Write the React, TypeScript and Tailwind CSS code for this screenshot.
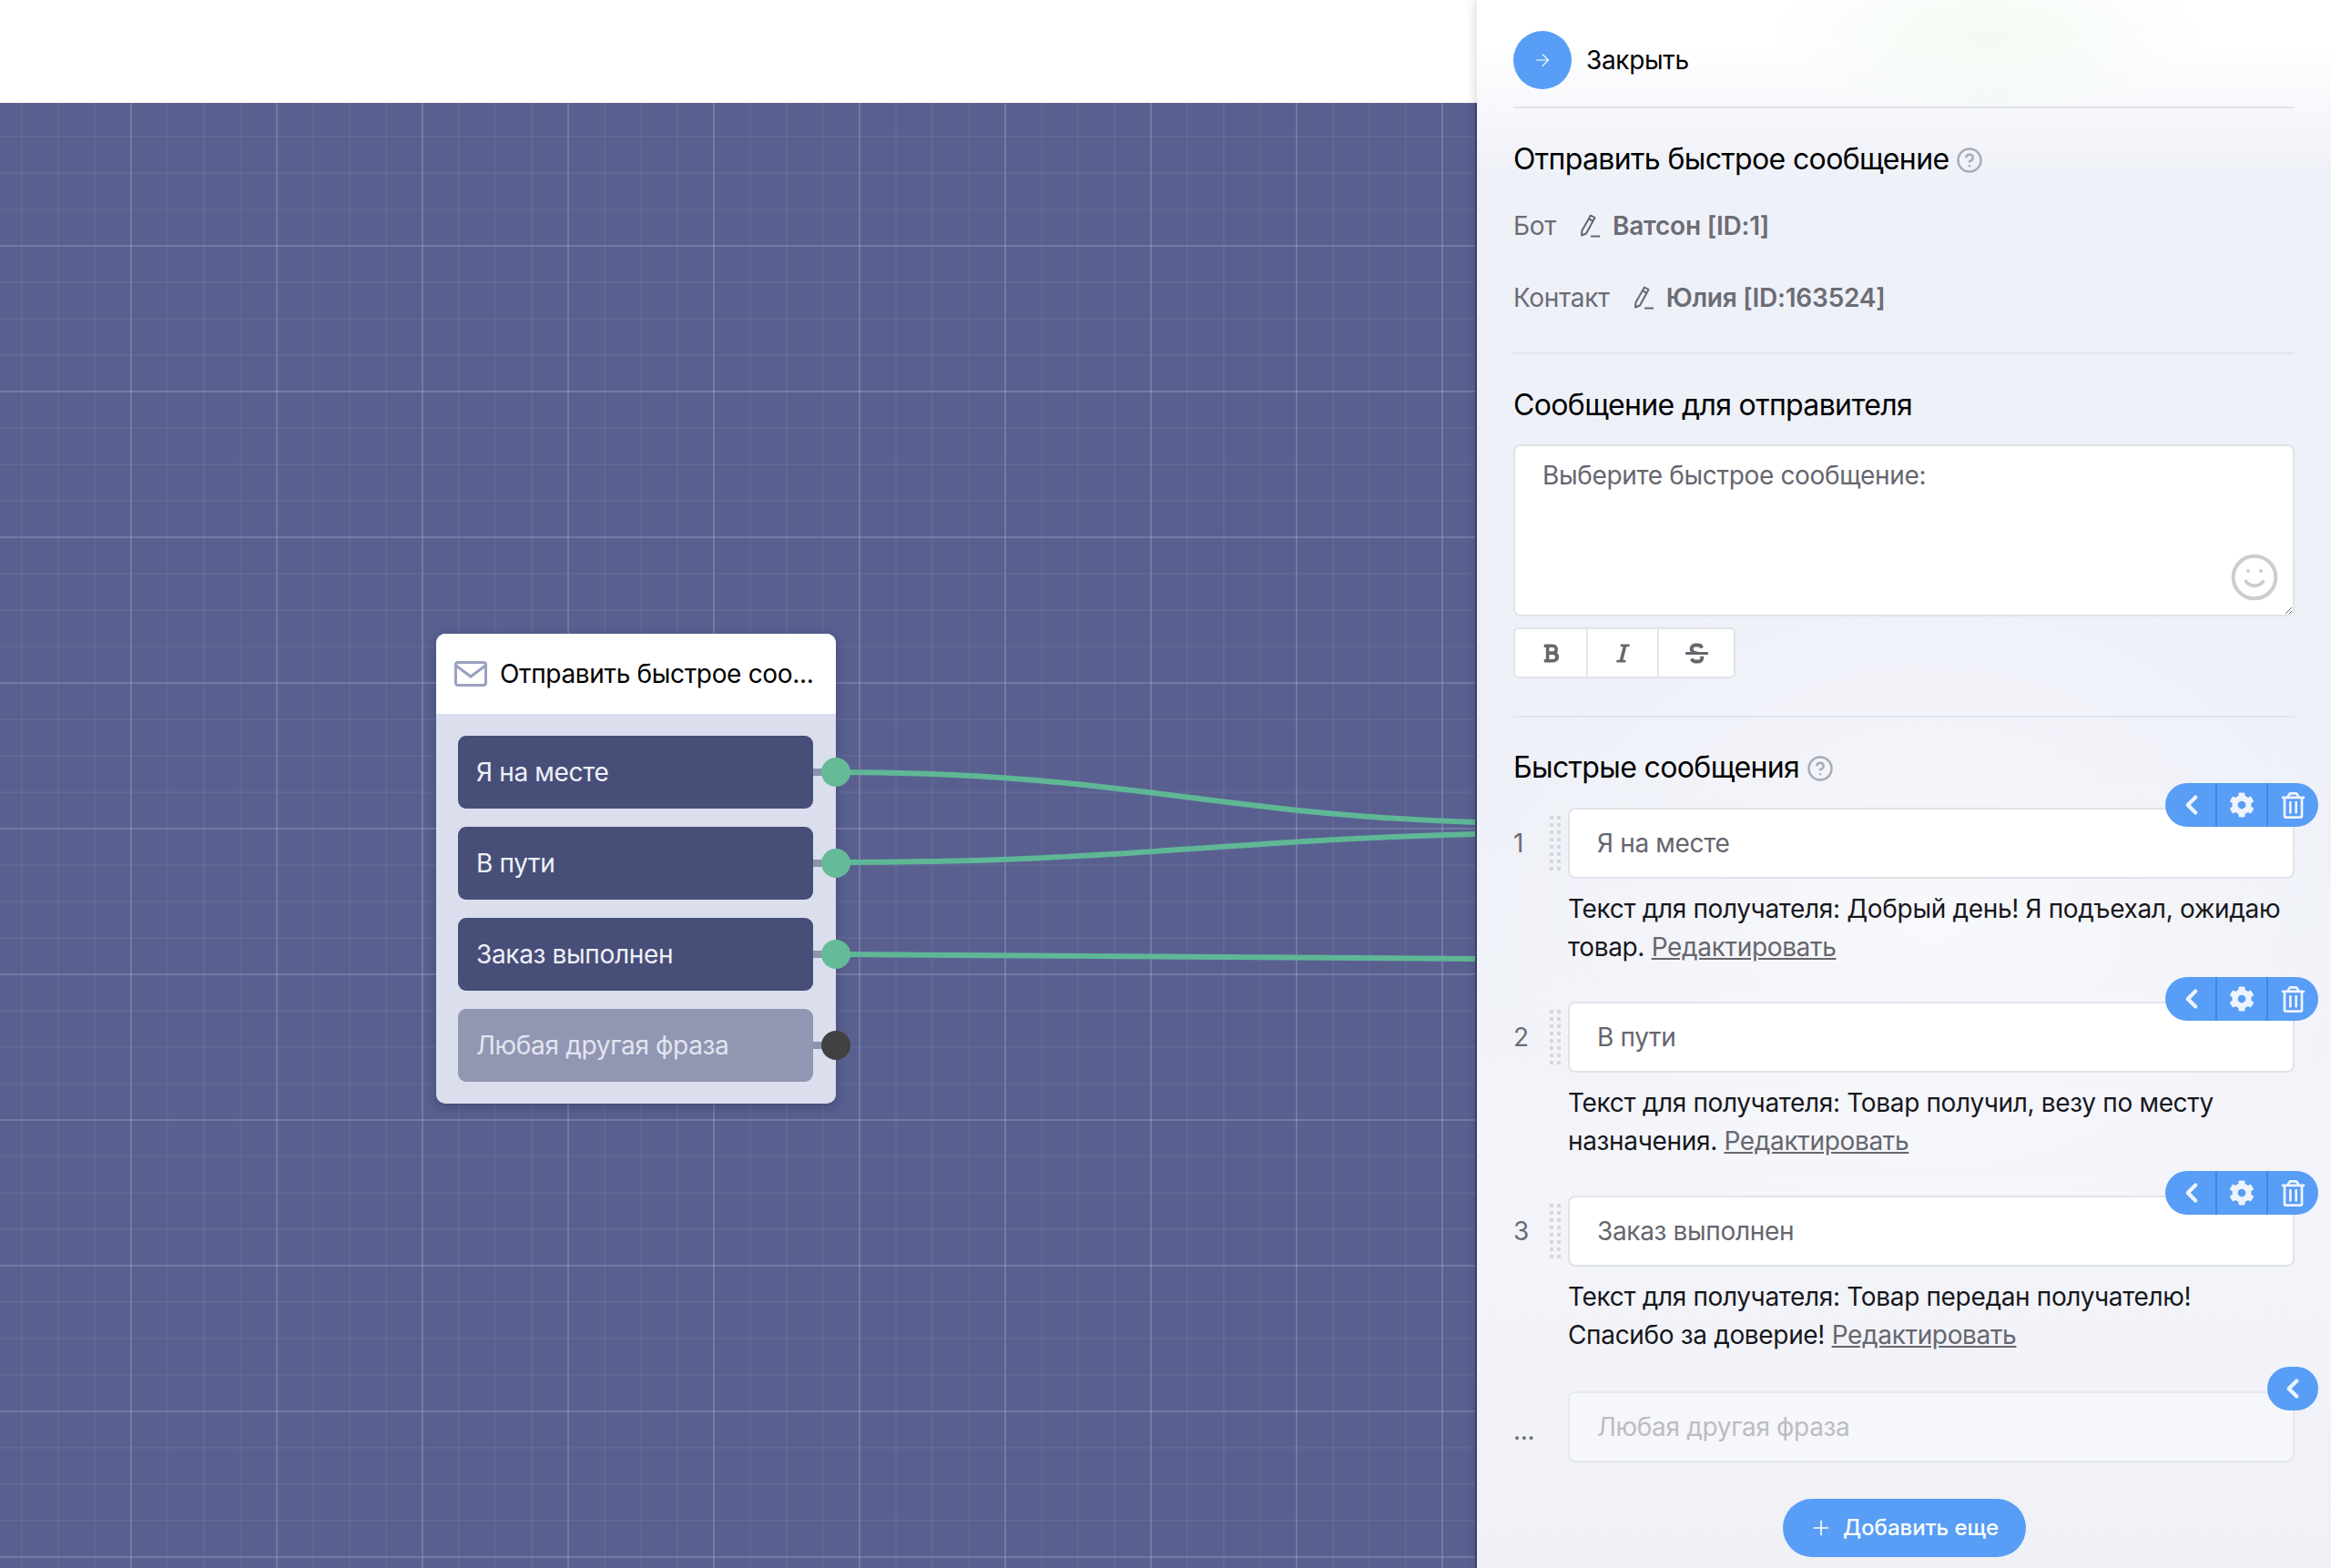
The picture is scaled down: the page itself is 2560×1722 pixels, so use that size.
import React from 'react';
import { ArrowRight, ChevronLeft, CircleHelp, Plus, Smile } from 'lucide-react';
import { FaBold, FaCog, FaItalic, FaRegTrashAlt, FaStrikethrough } from 'react-icons/fa';

const FONT = "font-['Inter','Noto_Sans',sans-serif]";

const nodeRows = [
  { label: 'Я на месте', muted: false },
  { label: 'В пути', muted: false },
  { label: 'Заказ выполнен', muted: false },
  { label: 'Любая другая фраза', muted: true },
];

const messages = [
  { n: '1', label: 'Я на месте', lines: ['Текст для получателя: Добрый день! Я подъехал, ожидаю', 'товар. '] },
  { n: '2', label: 'В пути', lines: ['Текст для получателя: Товар получил, везу по месту', 'назначения. '] },
  { n: '3', label: 'Заказ выполнен', lines: ['Текст для получателя: Товар передан получателю!', 'Спасибо за доверие! '] },
];

const PencilIcon = () => (
  <svg width="24" height="28" viewBox="0 0 24 28" fill="none" stroke="#66666e" strokeWidth="2" className="shrink-0">
    <path d="M13 2.5l4.5 2.5L8 22.5l-5 2 .4-5.2z" strokeLinejoin="round" />
    <path d="M11 6.2l4.5 2.6M13 25.5h10" />
  </svg>
);

const DragHandle = () => (
  <div className="grid grid-cols-2 gap-x-[4px] gap-y-[4px] w-[12px]">
    {Array.from({ length: 16 }).map((_, i) => (
      <span key={i} className="w-[4px] h-[4px] bg-[#d6d7de]" />
    ))}
  </div>
);

const ActionPill = () => (
  <div className="absolute -top-[29px] -right-[28px] flex h-[48px] w-[168px] rounded-full bg-[#589df6] text-[#eef4fe] overflow-hidden">
    <div className="w-[57px] flex items-center justify-center border-r-2 border-[#3f87ec] pl-[3px]">
      <ChevronLeft size={34} strokeWidth={3} />
    </div>
    <div className="w-[56px] flex items-center justify-center border-r-2 border-[#3f87ec]">
      <FaCog size={28} />
    </div>
    <div className="flex-1 flex items-center justify-center">
      <FaRegTrashAlt size={29} />
    </div>
  </div>
);

const Divider = ({ className }: { className: string }) => <div className={`h-[2px] bg-[#e1e4ee] ${className}`} />;

const Canvas = () => (
  <div className="relative flex-1 overflow-hidden border-r-2 border-[#3f4670] bg-[#596090] bg-[linear-gradient(to_right,rgba(255,255,255,0.12)_2px,transparent_2px),linear-gradient(to_bottom,rgba(255,255,255,0.12)_2px,transparent_2px),linear-gradient(to_right,rgba(255,255,255,0.045)_2px,transparent_2px),linear-gradient(to_bottom,rgba(255,255,255,0.045)_2px,transparent_2px)] bg-[size:160px_160px,160px_160px,40px_40px,40px_40px] bg-[position:143px_156px,143px_156px,23px_36px,23px_36px]">
    <svg className="absolute inset-0" width="1622" height="1609" fill="none" stroke="#5fb795" strokeWidth="6">
      <path d="M918 735 C1230 735 1340 782 1622 790" />
      <path d="M918 834 C1230 834 1340 810 1622 803" />
      <path d="M918 935 C1230 935 1340 940 1622 940" />
    </svg>

    <div className={`absolute left-[479px] top-[583px] w-[439px] rounded-[10px] bg-[#dbdeed] shadow-[0_4px_12px_rgba(30,35,70,0.35)] text-[28px] tracking-[-0.012em] ${FONT}`}>
      <div className="h-[88px] rounded-t-[10px] bg-white flex items-center pl-[20px] pr-[24px] gap-[14px]">
        <svg width="36" height="28" viewBox="0 0 36 28" fill="none" stroke="#9aa1c0" strokeWidth="3" className="shrink-0">
          <rect x="1.5" y="1.5" width="33" height="25" rx="2.5" />
          <path d="M2 5l16 12L34 5" />
        </svg>
        <span className="whitespace-nowrap leading-[40px] text-black">Отправить быстрое соо...</span>
      </div>
      <div className="flex flex-col gap-[20px] pt-[24px] pb-[24px] pl-[24px] pr-[25px]">
        {nodeRows.map(row => (
          <div key={row.label} className="relative">
            <div
              className={`h-[80px] rounded-[9px] flex items-center px-[20px] ${
                row.muted ? 'bg-[#9196b3] text-[#e3e5f0]' : 'bg-[#474e78] text-[#eef0f8]'
              }`}
            >
              {row.label}
            </div>
            <div className="absolute -right-[20px] top-[36px] w-[20px] h-[8px] bg-[#8b93ad]" />
            <div
              className={`absolute -right-[41px] top-[24px] w-[32px] h-[32px] rounded-full ${
                row.muted ? 'bg-[#414141]' : 'bg-[#65bb98]'
              }`}
            />
          </div>
        ))}
      </div>
    </div>
  </div>
);

const SidePanel = () => (
  <div className={`relative z-10 w-[938px] h-full overflow-hidden px-[40px] pt-[34px] text-[28px] tracking-[-0.012em] shadow-[-3px_0_10px_rgba(0,0,0,0.12)] bg-[radial-gradient(ellipse_240px_90px_at_560px_40px,rgba(228,245,228,0.45),transparent),radial-gradient(ellipse_500px_400px_at_500px_1000px,rgba(255,255,255,0.5),transparent),linear-gradient(180deg,#ffffff_50px,#eff1f8_190px,#eef0f8_800px,#f3f5fa_1300px,#eff1f7_100%)] ${FONT}`}>
    <div className="flex items-center h-[64px] gap-[16px]">
      <div className="w-[64px] h-[64px] rounded-full bg-[#589df6] flex items-center justify-center text-white">
        <ArrowRight size={22} strokeWidth={1.25} />
      </div>
      <span className="text-black">Закрыть</span>
    </div>
    <Divider className="mt-[19px]" />

    <div className="mt-[32px] flex items-center h-[48px] text-[32px] tracking-[-0.02em] text-black">
      Отправить быстрое сообщение
      <CircleHelp size={30} strokeWidth={2} className="ml-[8px] mt-[2px] text-[#a9abb6]" />
    </div>
    <div className="mt-[28px] h-[42px] flex items-center text-[#6c6c74]">
      <span>Бот</span>
      <span className="ml-[25px] mr-[13px] flex"><PencilIcon /></span>
      <span className="font-semibold tracking-[-0.008em]">Ватсон [ID:1]</span>
    </div>
    <div className="mt-[37px] h-[42px] flex items-center text-[#6c6c74]">
      <span>Контакт</span>
      <span className="ml-[25px] mr-[13px] flex"><PencilIcon /></span>
      <span className="font-semibold tracking-[-0.008em]">Юлия [ID:163524]</span>
    </div>
    <Divider className="mt-[39px]" />

    <div className="mt-[32px] h-[48px] flex items-center text-[32px] tracking-[-0.02em] text-black">Сообщение для отправителя</div>
    <div className="relative mt-[19px] h-[189px]">
      <textarea
        readOnly
        defaultValue="Выберите быстрое сообщение:"
        className="block w-full h-full rounded-[8px] border-2 border-[#e1e3ea] bg-white px-[30px] py-[12px] leading-[40px] text-[#666670] outline-none"
      />
      <Smile size={56} strokeWidth={1.7} className="absolute right-[16px] bottom-[15px] text-[#cdcdcd]" />
    </div>
    <div className="mt-[12px] flex w-[244px] h-[56px] rounded-[6px] border-2 border-[#e1e3ea] bg-white text-[#66666e]">
      <div className="w-[80px] flex items-center justify-center border-r-2 border-[#e4e5ec]"><FaBold size={23} /></div>
      <div className="w-[78px] flex items-center justify-center border-r-2 border-[#e4e5ec]"><FaItalic size={23} /></div>
      <div className="flex-1 flex items-center justify-center"><FaStrikethrough size={25} /></div>
    </div>
    <Divider className="mt-[41px]" />

    <div className="mt-[31px] h-[48px] flex items-center text-[32px] tracking-[-0.02em] text-black">
      Быстрые сообщения
      <CircleHelp size={30} strokeWidth={2} className="ml-[8px] mt-[2px] text-[#a9abb6]" />
    </div>

    <div className="mt-[20px]">
      {messages.map(m => (
        <div key={m.n} className="h-[213px]">
          <div className="flex items-center">
            <span className="w-[40px] text-[#6c6c74]">{m.n}</span>
            <DragHandle />
            <div className="relative ml-[8px] flex-1 h-[78px] rounded-[8px] border-2 border-[#e1e3ea] bg-white flex items-center pl-[30px] text-[#66666e]">
              {m.label}
              <ActionPill />
            </div>
          </div>
          <div className="mt-[12px] pl-[60px] leading-[42px] text-[#17171c] whitespace-nowrap">
            <div>{m.lines[0]}</div>
            <div>
              {m.lines[1]}
              <a className="text-[#66666e] underline">Редактировать</a>
            </div>
          </div>
        </div>
      ))}
      <div className="mt-[2px] flex items-center">
        <span className="w-[60px] text-[#6c6c74] pt-[8px]">...</span>
        <div className="relative flex-1 h-[78px] rounded-[8px] border-2 border-[#e6e8ef] bg-[#f6f7fb] flex items-center pl-[30px] text-[#bcbcc4]">
          Любая другая фраза
          <div className="absolute -top-[29px] -right-[28px] w-[56px] h-[48px] rounded-full bg-[#589df6] text-[#eef4fe] flex items-center justify-center">
            <ChevronLeft size={34} strokeWidth={3} />
          </div>
        </div>
      </div>
    </div>

    <div className="mt-[40px] flex justify-center">
      <div className="w-[267px] h-[64px] rounded-full bg-[#589df6] text-white flex items-center justify-center gap-[11px] text-[24px] tracking-normal font-medium">
        <Plus size={26} strokeWidth={1.5} />
        Добавить еще
      </div>
    </div>
  </div>
);

export default function App() {
  return (
    <div className="flex w-[2560px] h-[1722px] overflow-hidden bg-white">
      <div className="flex-1 flex flex-col min-w-0">
        <div className="h-[113px] bg-white" />
        <Canvas />
      </div>
      <SidePanel />
    </div>
  );
}
